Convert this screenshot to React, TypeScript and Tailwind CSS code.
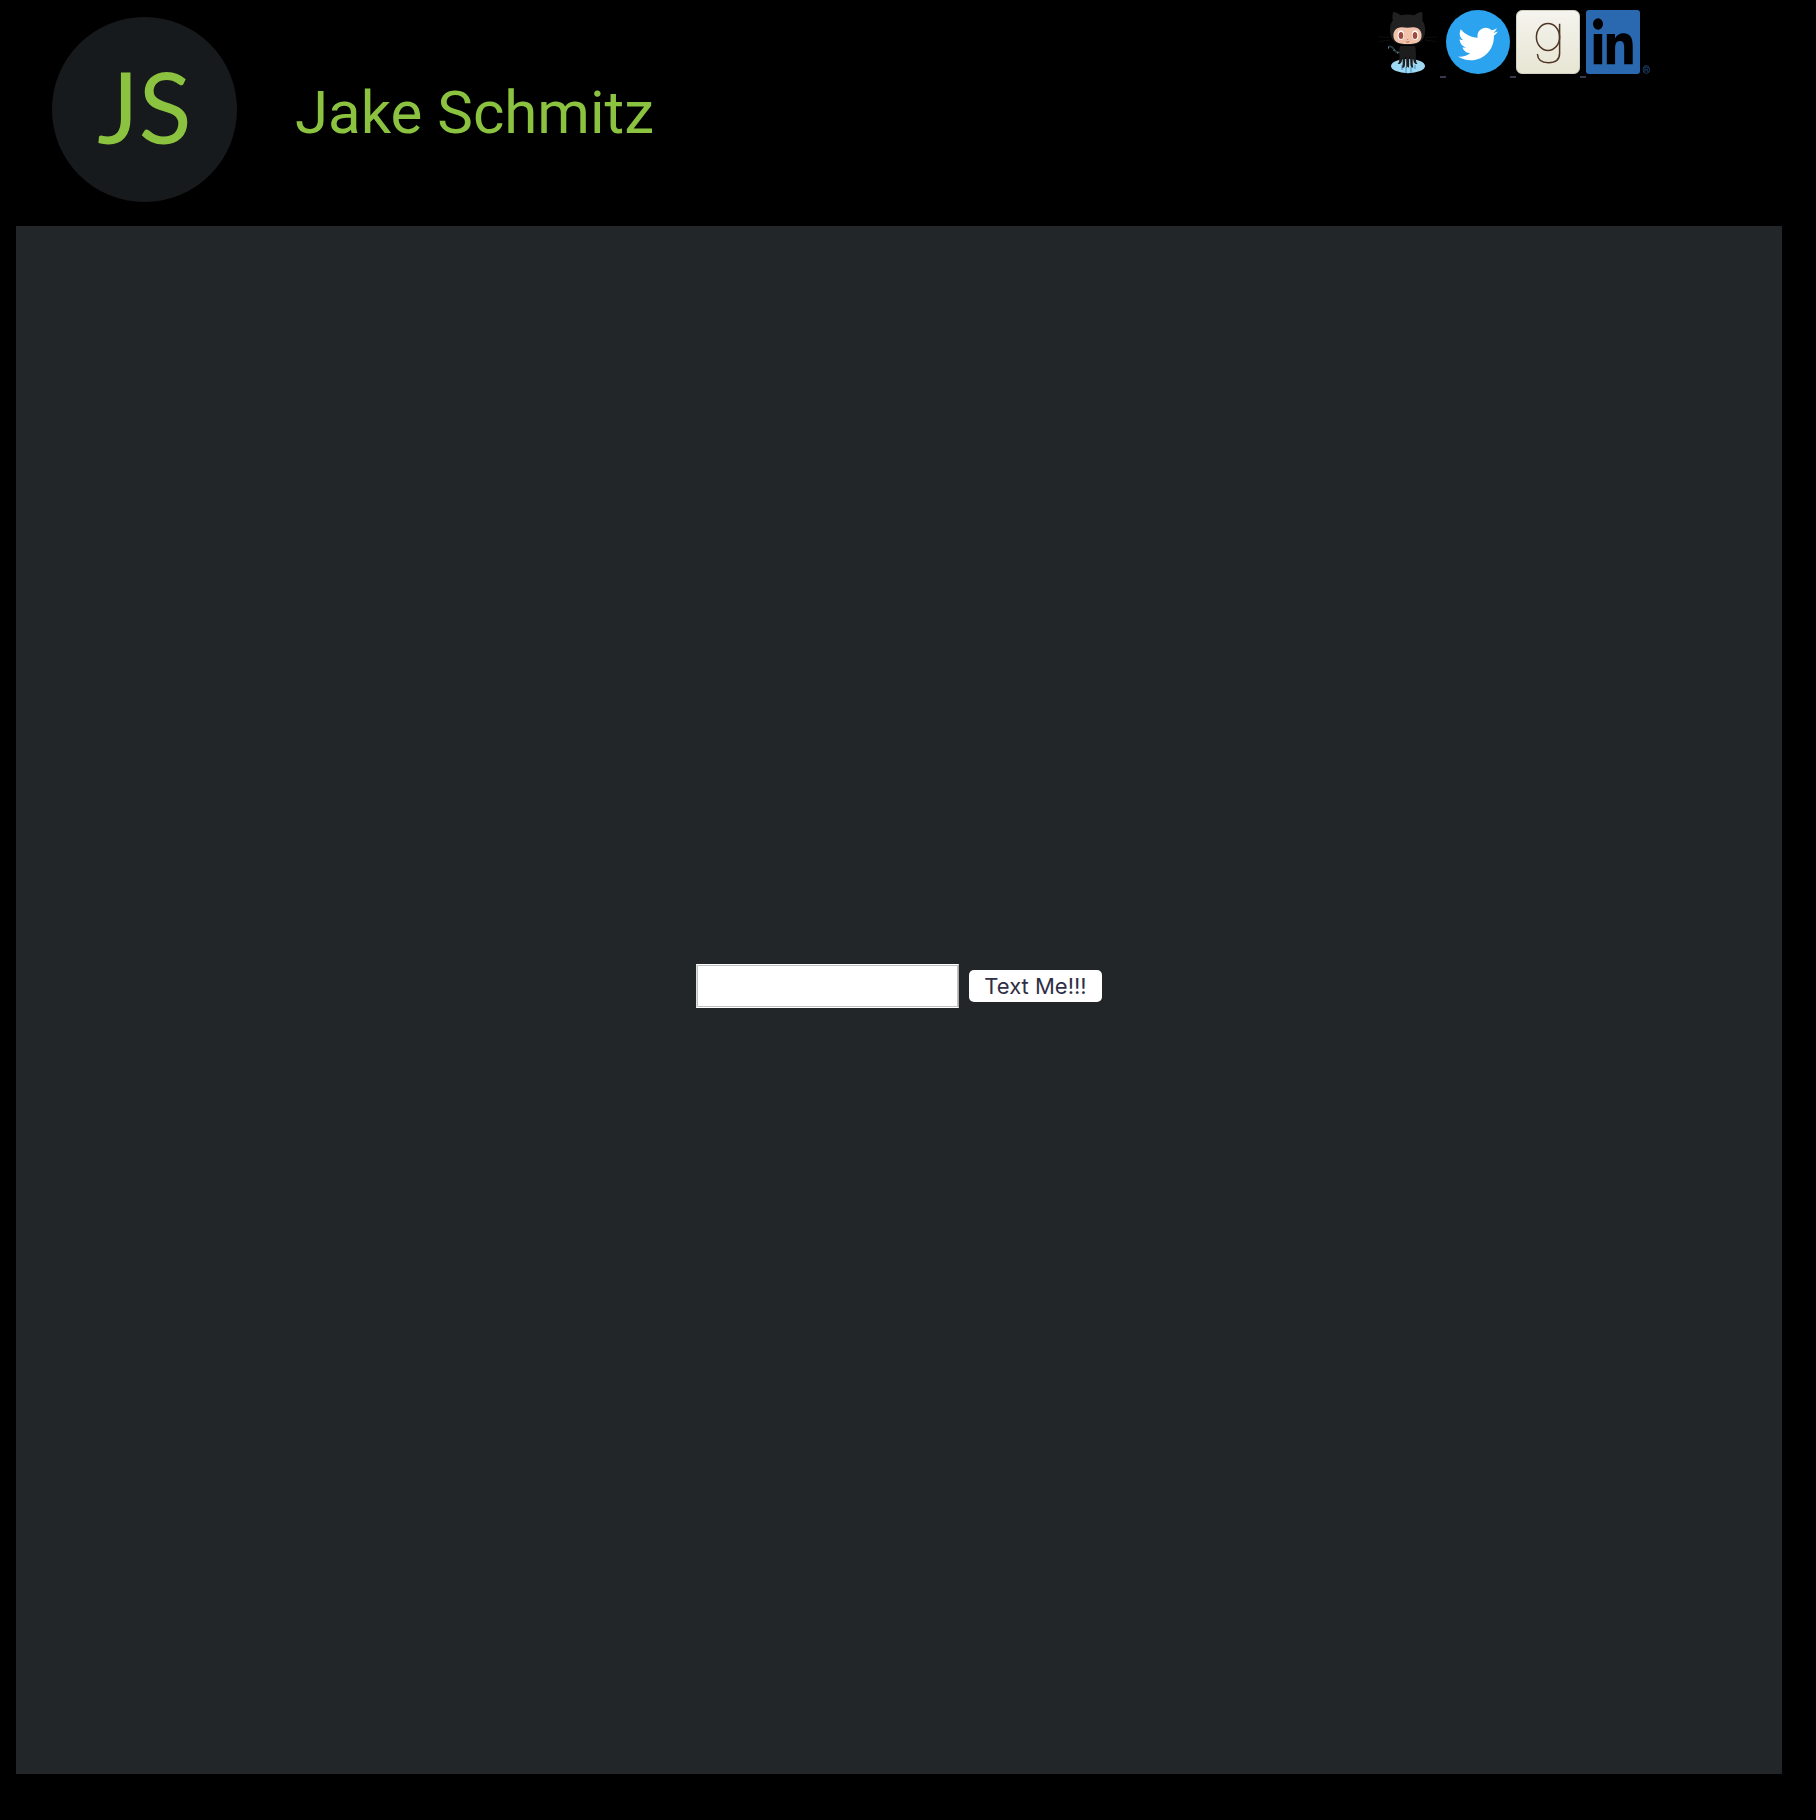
import type { ReactNode } from "react";
import { FaTwitter } from "react-icons/fa";

function Octocat() {
  return (
    <svg viewBox="0 0 64 64" className="size-16" aria-hidden="true">
      <ellipse cx="32" cy="56" rx="17" ry="7.2" fill="#9fd8f2" />
      <path d="M25 55h2v5h-2zM29 57h2v6h-2zM34 57h2v6h-2zM38 55h2v4h-2z" fill="#6fb4dc" />
      <g stroke="#121212" strokeWidth=".8" fill="none">
        <path d="M14 27.5 2 27M14.5 30 3 31.5M49 27.5 61 27M48.500 30 60 31.500" />
      </g>
      <path d="M26.500 42c-4 1.200-6.500.3-8.300-2.300-1.400-2.200-2.700-3.600-5-3.200" fill="none" stroke="#27373d" strokeWidth="1.800" strokeLinecap="round" />
      <path d="M12.500 36.500v2.200M18.500 39.500l-1 1.500M22 42l-.5 1.500" stroke="#8fb0b8" strokeWidth=".7" />
      <path
        d="M24 36h15c.9 3 1 7 .9 12 0 3 .3 4.600 1.600 6-1.700.5-3.500-.7-4-3l-.5-4c-.5 4-.4 8 .2 10.800-1.600 0-2.600-1-2.700-3L34 47h-.8l-.2 11-1.300-1.500L30.400 58l-.3-11h-.8l-.4 8.500c-.2 1.600-1.200 2.600-2.800 2.500.7-3 .8-7 .3-11l-.5 4c-.5 2.300-2.400 3.500-4.300 3 1.400-1.400 1.800-3 1.800-6-.1-5-.2-9 .6-12Z"
        fill="#1d1d1d"
      />
      <path
        d="M17.300 2c1.800-.2 5 1.500 7.500 3.300a31 31 0 0 1 13.400 0C40.700 3.500 44 1.800 45.700 2c1.200 2.700 1.200 5.800.5 8.200 2 2.600 2.900 5.600 2.900 9.300 0 9.500-3.600 15.300-17.600 15.300S14 29 14 19.500c0-3.700.9-6.700 2.900-9.300-.7-2.400-.8-5.500.4-8.200Z"
        fill="#212121"
      />
      <path
        d="M24 17.500c2.500-.5 5 .2 7.500.2s5-.7 7.500-.2c4 .5 6.600 3.700 6.600 7.700 0 6.300-4 8.800-14.100 8.800s-14.100-2.500-14.100-8.800c0-4 2.600-7.200 6.600-7.700Z"
        fill="#f1c3ab"
      />
      <ellipse cx="24.800" cy="25.200" rx="3.200" ry="4.600" fill="#fff" />
      <ellipse cx="39.200" cy="25.200" rx="3.200" ry="4.600" fill="#fff" />
      <ellipse cx="25" cy="25.500" rx="2.300" ry="3.500" fill="#9c4b40" />
      <ellipse cx="39" cy="25.500" rx="2.300" ry="3.500" fill="#9c4b40" />
      <circle cx="31.700" cy="29.500" r=".6" fill="#b96b56" />
      <path d="M30 31.500q1.700 1.600 3.400 0" fill="none" stroke="#a9573f" strokeWidth=".8" />
    </svg>
  );
}

function Twitter() {
  return (
    <span className="flex size-16 items-center justify-center rounded-full bg-[#2ba3ef] pt-[3px] text-white">
      <FaTwitter className="size-10" aria-hidden="true" />
    </span>
  );
}

function Goodreads() {
  return (
    <span className="block size-16 rounded-md border border-[#d2d0c2] bg-linear-to-b from-[#f5f4ee] to-[#e7e5d3]">
      <svg viewBox="1 1 62 62" className="size-full" fill="none" stroke="#4f3626" strokeWidth="1.500" aria-hidden="true">
        <ellipse cx="32" cy="27" rx="11.600" ry="13.500" />
        <path d="M43.600 13.700v29.500c0 6.500-4.300 9.500-11.300 9.500-6.300 0-10.500-2.700-10.900-8.700" />
      </svg>
    </span>
  );
}

function LinkedIn() {
  return (
    <svg viewBox="0 0 64 64" className="size-16" aria-hidden="true">
      <rect width="54" height="64" rx="3" fill="#2a69b0" />
      <ellipse cx="12" cy="14" rx="5" ry="5.700" />
      <path d="M7.700 24h8.500v30.300H7.700zM20.800 24H29v4.200c1.500-3 4.500-5 8.500-5 7 0 9.200 5 9.200 13v18.100h-8.500V38.500c0-4.500-.6-7.500-4.200-7.500-3.800 0-4.900 3-4.900 7.500v15.800h-8.300Z" />
      <g fill="none" stroke="#1d4a7c" strokeWidth=".8">
        <ellipse cx="60.300" cy="59.500" rx="3.200" ry="3.900" />
        <path d="M59 62v-5h1.700a1.300 1.300 0 0 1 0 2.700H59m1.700 0L62 62" />
      </g>
    </svg>
  );
}

const links: { name: string; icon: ReactNode }[] = [
  { name: "GitHub", icon: <Octocat /> },
  { name: "Twitter", icon: <Twitter /> },
  { name: "Goodreads", icon: <Goodreads /> },
  { name: "LinkedIn", icon: <LinkedIn /> },
];

export default function App() {
  return (
    <div className="flex min-h-screen flex-col bg-black pr-[34px] pb-[46px] pl-4 font-['Inter',sans-serif]">
      <header className="flex items-start justify-between pr-[132px] pb-6 pl-9">
        <div className="flex items-center gap-[58px] pt-[17px] text-[#8bc23f]">
          <div className="flex size-[185px] items-center justify-center rounded-full bg-[#171a1c] pb-2 font-['Lato',sans-serif] text-[98px] leading-none">
            JS
          </div>
          <h1 className="pt-1.5 font-['Roboto',sans-serif] text-[60px] leading-none">Jake Schmitz</h1>
        </div>
        <nav className="flex pt-2.5" aria-label="Profiles">
          {links.map(({ name, icon }) => (
            <a key={name} href="#" aria-label={name} className="group flex items-end">
              {icon}
              <span className="-mb-1 h-0.5 w-1.5 bg-[#38384f] group-last:hidden" />
            </a>
          ))}
        </nav>
      </header>
      <main className="flex grow items-center justify-center bg-[#222628] pb-7">
        <form className="flex items-center gap-2.5" onSubmit={(e) => e.preventDefault()}>
          <input
            type="text"
            aria-label="Message"
            className="h-11 w-[263px] border border-t-white border-r-[#a8a8a8] border-b-white border-l-[#e0e0e0] bg-white px-2 text-[22px] text-[#2f2f45] inset-ring inset-ring-[#c0c2c4] outline-none"
          />
          <button
            type="submit"
            className="h-8 rounded-[5px] bg-white px-[15px] text-[22px] leading-8 text-[#2f2f45]"
          >
            Text Me!!!
          </button>
        </form>
      </main>
    </div>
  );
}
